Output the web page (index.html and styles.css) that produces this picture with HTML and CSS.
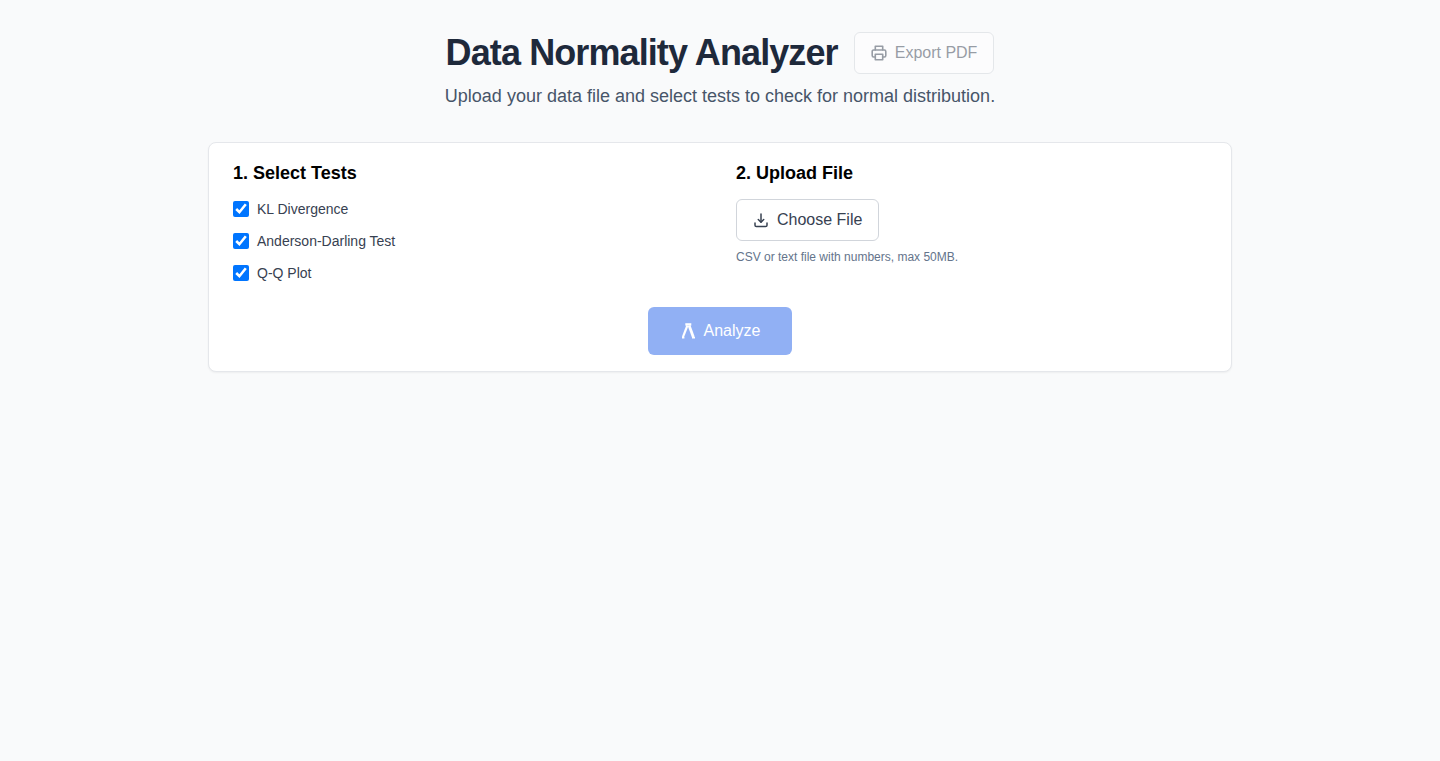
FILE: index.html
```html
<!DOCTYPE html>
<html lang="en">
<head>
<meta charset="utf-8">
<title>Data Normality Analyzer</title>
<link rel="stylesheet" href="styles.css">
</head>
<body>
<main class="page">
  <header class="header">
    <div class="title-row">
      <h1 class="title">Data Normality Analyzer</h1>
      <button class="btn btn-export" disabled>
        <svg class="icon" viewBox="0 0 16 16" fill="none" stroke="currentColor" stroke-width="1.6" stroke-linejoin="round" stroke-linecap="round"><path d="M4.300 5V1.300h7.400V5"/><path d="M4.300 12H2.600a1.400 1.400 0 0 1-1.400-1.400V6.400A1.400 1.400 0 0 1 2.600 5h10.800a1.400 1.400 0 0 1 1.400 1.400v4.200a1.400 1.400 0 0 1-1.400 1.400h-1.700"/><path d="M4.300 9.300h7.400v5.500H4.300z"/></svg>
        Export PDF
      </button>
    </div>
    <p class="subtitle">Upload your data file and select tests to check for normal distribution.</p>
  </header>
  <section class="card">
    <div class="columns">
      <div>
        <h2 class="section-title">1. Select Tests</h2>
        <div class="tests">
          <label class="test"><input type="checkbox" checked class="check"><span>KL Divergence</span></label>
          <label class="test"><input type="checkbox" checked class="check"><span>Anderson-Darling Test</span></label>
          <label class="test"><input type="checkbox" checked class="check"><span>Q-Q Plot</span></label>
        </div>
      </div>
      <div>
        <h2 class="section-title">2. Upload File</h2>
        <button class="btn btn-file">
          <svg class="icon" viewBox="0 0 16 16" fill="none" stroke="currentColor" stroke-width="1.500" stroke-linecap="round" stroke-linejoin="round"><path d="M8 2v8"/><path d="M5.300 7.500 8 10.200l2.700-2.700"/><path d="M2 11v2.200c0 .8.600 1.400 1.400 1.400h9.200c.8 0 1.400-.6 1.400-1.400V11"/></svg>
          Choose File
        </button>
        <p class="hint">CSV or text file with numbers, max 50MB.</p>
      </div>
    </div>
    <div class="actions">
      <button class="btn-analyze" disabled>
        <svg class="icon" viewBox="0 0 16 16" fill="none" stroke="currentColor"><path stroke-width="2.400" d="M5.300 1.400h6"/><path stroke-width="2.200" d="M7.400 2.500 2.900 14.200"/><path stroke-width="2.800" d="M9.100 2.500 13.400 14.200"/><path stroke-width="1.400" d="M2 14.700h2.400M12 14.700h3"/></svg>
        Analyze
      </button>
    </div>
  </section>
</main>
</body>
</html>
```

FILE: styles.css
```css
* { box-sizing: border-box; }
html, body { margin: 0; }
body {
  min-height: 761px;
  background: #f9fafb;
  color: #1f2937;
  font-family: "Liberation Sans", Arial, sans-serif;
}
.page {
  width: 1024px;
  margin: 0 auto;
  padding-top: 32px;
}
.header {
  text-align: center;
  margin-bottom: 32px;
}
.title-row {
  display: flex;
  justify-content: center;
  align-items: center;
  gap: 16px;
}
.title {
  margin: 0;
  font-size: 36px;
  line-height: 40px;
  font-weight: 700;
  letter-spacing: -0.9px;
  color: #1e293b;
}
.subtitle {
  margin: 8px 0 0;
  font-size: 18px;
  line-height: 28px;
  color: #475569;
}
.btn {
  display: inline-flex;
  align-items: center;
  gap: 8px;
  height: 42px;
  padding: 0 16px;
  border: 1px solid #d1d5db;
  border-radius: 6px;
  background: #fff;
  color: #374151;
  font-family: inherit;
  font-size: 16px;
}
.btn-export { opacity: 0.5; }
.icon { width: 16px; height: 16px; flex: none; }
.card {
  background: #fff;
  border: 1px solid #e5e7eb;
  border-radius: 8px;
  padding: 16px 24px;
  box-shadow: 0 1px 2px rgba(0,0,0,.05);
}
.columns {
  display: grid;
  grid-template-columns: 1fr 1fr;
  gap: 32px;
}
.section-title {
  margin: 0 0 12px;
  font-size: 18px;
  line-height: 28px;
  font-weight: 700;
  color: #000;
}
.tests {
  display: flex;
  flex-direction: column;
  gap: 12px;
}
.test {
  display: flex;
  align-items: center;
  gap: 8px;
  font-size: 14px;
  line-height: 20px;
  color: #374151;
}
.check {
  width: 16px;
  height: 16px;
  margin: 0;
}
.hint {
  margin: 8px 0 0;
  font-size: 12px;
  line-height: 16px;
  color: #64748b;
}
.actions {
  display: flex;
  justify-content: center;
  margin-top: 24px;
}
.btn-analyze {
  display: inline-flex;
  align-items: center;
  gap: 8px;
  height: 48px;
  padding: 0 32px;
  border: 0;
  border-radius: 6px;
  background: #2563eb;
  color: #fff;
  font-family: inherit;
  font-size: 16px;
  opacity: 0.5;
}
```
